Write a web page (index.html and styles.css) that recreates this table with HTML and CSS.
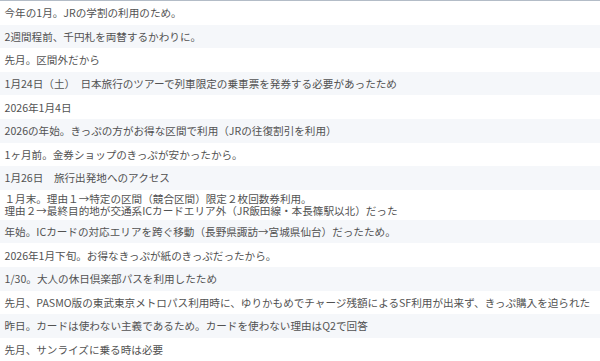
FILE: index.html
```html
<!DOCTYPE html>
<html lang="ja">
<head>
<meta charset="utf-8">
<link rel="stylesheet" href="styles.css">
</head>
<body>
<div class="list">
  <div class="row">今年の1月。JRの学割の利用のため。</div>
  <div class="row alt">2週間程前、千円札を両替するかわりに。</div>
  <div class="row">先月。区間外だから</div>
  <div class="row alt">1月24日（土）　日本旅行のツアーで列車限定の乗車票を発券する必要があったため</div>
  <div class="row">2026年1月4日</div>
  <div class="row alt">2026の年始。きっぷの方がお得な区間で利用（JRの往復割引を利用）</div>
  <div class="row">1ヶ月前。金券ショップのきっぷが安かったから。</div>
  <div class="row alt">1月26日　旅行出発地へのアクセス</div>
  <div class="row multi">
    <div class="line">１月末。理由１→特定の区間（競合区間）限定２枚回数券利用。</div>
    <div class="line">理由２→最終目的地が交通系ICカードエリア外（JR飯田線・本長篠駅以北）だった</div>
  </div>
  <div class="row alt">年始。ICカードの対応エリアを跨ぐ移動（長野県諏訪→宮城県仙台）だったため。</div>
  <div class="row">2026年1月下旬。お得なきっぷが紙のきっぷだったから。</div>
  <div class="row alt">1/30。大人の休日倶楽部パスを利用したため</div>
  <div class="row">先月、PASMO版の東武東京メトロパス利用時に、ゆりかもめでチャージ残額によるSF利用が出来ず、きっぷ購入を迫られた</div>
  <div class="row alt">昨日。カードは使わない主義であるため。カードを使わない理由はQ2で回答</div>
  <div class="row">先月、サンライズに乗る時は必要</div>
</div>
</body>
</html>
```
FILE: styles.css
```css
html, body {
  margin: 0;
  padding: 0;
  background: #ffffff;
}
body {
  font-family: "Noto Sans CJK JP", "Noto Sans", sans-serif;
  font-size: 10.6px;
  color: #525252;
  overflow: hidden;
}
.list {
  border-top: 1px solid #b3bcc7;
  display: flex;
  flex-direction: column;
}
.row {
  height: 23.6px;
  display: flex;
  align-items: center;
  padding: 0 4.5px;
  white-space: nowrap;
  line-height: 13px;
}
.row.alt {
  background: #f5f7fa;
}
.row.multi {
  height: 30px;
  flex-direction: column;
  align-items: flex-start;
  justify-content: center;
  padding-top: 1px;
  box-sizing: border-box;
}
.line {
  height: 12px;
  line-height: 12px;
}
```
